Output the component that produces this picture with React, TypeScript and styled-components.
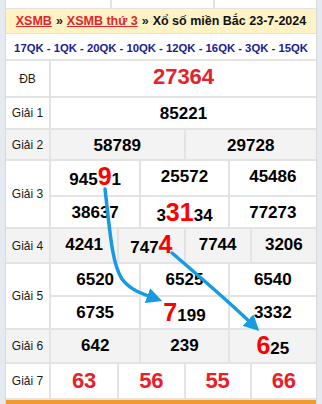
import React from 'react';
import styled, { createGlobalStyle } from 'styled-components';

type Part = { text: string; hot?: boolean };
type Cell = Part[];

type Prize = {
  label: string;
  cols: number;
  rows: number[];
  shade?: boolean;
  tone?: 'big' | 'red';
  cells: Cell[];
};

const plain = (text: string): Cell => [{ text }];

const prizes: Prize[] = [
  { label: 'ĐB', cols: 1, rows: [35], tone: 'big', cells: [plain('27364')] },
  { label: 'Giải 1', cols: 1, rows: [30], cells: [plain('85221')] },
  { label: 'Giải 2', cols: 2, rows: [29], shade: true, cells: [plain('58789'), plain('29728')] },
  {
    label: 'Giải 3',
    cols: 3,
    rows: [34, 32],
    cells: [
      [{ text: '945' }, { text: '9', hot: true }, { text: '1' }],
      plain('25572'),
      plain('45486'),
      plain('38637'),
      [{ text: '3' }, { text: '31', hot: true }, { text: '34' }],
      plain('77273'),
    ],
  },
  {
    label: 'Giải 4',
    cols: 4,
    rows: [33],
    shade: true,
    cells: [plain('4241'), [{ text: '747' }, { text: '4', hot: true }], plain('7744'), plain('3206')],
  },
  {
    label: 'Giải 5',
    cols: 3,
    rows: [31, 33],
    cells: [
      plain('6520'),
      plain('6525'),
      plain('6540'),
      plain('6735'),
      [{ text: '7', hot: true }, { text: '199' }],
      plain('3332'),
    ],
  },
  {
    label: 'Giải 6',
    cols: 3,
    rows: [32],
    shade: true,
    cells: [plain('642'), plain('239'), [{ text: '6', hot: true }, { text: '25' }]],
  },
  { label: 'Giải 7', cols: 4, rows: [34], tone: 'red', cells: [plain('63'), plain('56'), plain('55'), plain('66')] },
];

const codes = ['17QK', '1QK', '20QK', '10QK', '12QK', '16QK', '3QK', '15QK'];

export default function App() {
  return (
    <>
      <GlobalStyle />
      <Page>
        <Board>
          <StubRow>
            <StubCell />
            <StubCell />
            <StubCell />
          </StubRow>
          <Title>
            <TitleLink href="#">XSMB</TitleLink>
            <Sep>»</Sep>
            <TitleLink href="#">XSMB thứ 3</TitleLink>
            <Sep>»</Sep>
            <span>Xổ số miền Bắc 23-7-2024</span>
          </Title>
          <Codes>{codes.join(' - ')}</Codes>
          {prizes.map((p) => (
            <PrizeRow key={p.label} $shade={p.shade}>
              <Label>{p.label}</Label>
              <Numbers $cols={p.cols} $rows={p.rows.map((h) => h + 'px').join(' ')}>
                {p.cells.map((cell, i) => (
                  <Num
                    key={i}
                    $tone={p.tone}
                    $first={i % p.cols === 0}
                    $top={i < p.cols}
                  >
                    {cell.map((part, j) =>
                      part.hot ? <Hot key={j}>{part.text}</Hot> : <span key={j}>{part.text}</span>
                    )}
                  </Num>
                ))}
              </Numbers>
            </PrizeRow>
          ))}
          <Footer />
        </Board>
        <Arrows width="322" height="404" viewBox="0 0 322 404">
          <defs>
            <marker id="head" markerWidth="4.5" markerHeight="4.5" refX="2" refY="2.25" orient="auto" markerUnits="strokeWidth">
              <path d="M0 0 L4.5 2.25 L0 4.5 Z" fill="#169be3" />
            </marker>
          </defs>
          <path
            d="M105 189 C 110 232, 112 264, 122 279 C 130 290, 143 294, 154 298"
            stroke="#169be3"
            strokeWidth="3.5"
            fill="none"
            strokeLinecap="round"
            markerEnd="url(#head)"
          />
          <path
            d="M172 253 C 200 277, 225 298, 253 325"
            stroke="#169be3"
            strokeWidth="3.5"
            fill="none"
            strokeLinecap="round"
            markerEnd="url(#head)"
          />
        </Arrows>
      </Page>
    </>
  );
}

const GlobalStyle = createGlobalStyle`
  * { box-sizing: border-box; }
  body {
    margin: 0;
    font-family: "Liberation Sans", Arial, sans-serif;
    background: #ffffff;
  }
`;

const Page = styled.div`
  position: relative;
  width: 322px;
  height: 404px;
  padding: 0 5px;
  background: #e5e9f0;
  overflow: hidden;
`;

const Board = styled.div`
  background: #ffffff;
  border-left: 1px solid #d9d9d9;
  border-right: 1px solid #d9d9d9;
`;

const StubRow = styled.div`
  display: grid;
  grid-template-columns: 104px 103px 1fr;
  height: 9px;
  border-bottom: 1px solid #e3e3e3;
`;

const StubCell = styled.div`
  & + & {
    border-left: 2px solid #e3e3e3;
  }
`;

const Title = styled.div`
  display: flex;
  align-items: center;
  justify-content: center;
  gap: 4px;
  height: 25px;
  background: #fff3c6;
  border-bottom: 1px solid #ece3c0;
  font-size: 12.5px;
  font-weight: bold;
  color: #111111;
`;

const TitleLink = styled.a`
  color: #e3242b;
  text-decoration: underline;
`;

const Sep = styled.span`
  color: #222222;
`;

const Codes = styled.div`
  display: flex;
  align-items: center;
  justify-content: center;
  height: 27px;
  padding-top: 2px;
  border-bottom: 2px solid #e3e3e3;
  font-size: 11.3px;
  font-weight: bold;
  color: #1b1b96;
  white-space: nowrap;
`;

const PrizeRow = styled.div<{ $shade?: boolean }>`
  display: grid;
  grid-template-columns: 45px 1fr;
  border-bottom: 2px solid #e3e3e3;
  background: ${(p) => (p.$shade ? '#f3f3f3' : '#ffffff')};
`;

const Label = styled.div`
  display: flex;
  align-items: center;
  justify-content: center;
  border-right: 2px solid #e3e3e3;
  font-size: 12px;
  color: #1a1a1a;
`;

const Numbers = styled.div<{ $cols: number; $rows: string }>`
  display: grid;
  grid-template-columns: repeat(${(p) => p.$cols}, 1fr);
  grid-template-rows: ${(p) => p.$rows};
`;

const Num = styled.div<{ $tone?: 'big' | 'red'; $first: boolean; $top: boolean }>`
  display: flex;
  align-items: baseline;
  justify-content: center;
  padding-top: ${(p) => (p.$tone === 'big' ? '5px' : p.$tone === 'red' ? '6px' : '7px')};
  line-height: 1;
  border-left: ${(p) => (p.$first ? 'none' : '2px solid #e3e3e3')};
  border-top: ${(p) => (p.$top ? 'none' : '2px solid #e3e3e3')};
  font-weight: bold;
  font-size: ${(p) => (p.$tone === 'big' ? '22px' : p.$tone === 'red' ? '22px' : '17px')};
  color: ${(p) => (p.$tone ? '#e8202a' : '#000000')};
`;

const Hot = styled.span`
  font-size: 25px;
  line-height: 17px;
  color: #ff0000;
`;

const Footer = styled.div`
  height: 4px;
  background: #f39a2e;
`;

const Arrows = styled.svg`
  position: absolute;
  left: 0;
  top: 0;
  pointer-events: none;
`;
